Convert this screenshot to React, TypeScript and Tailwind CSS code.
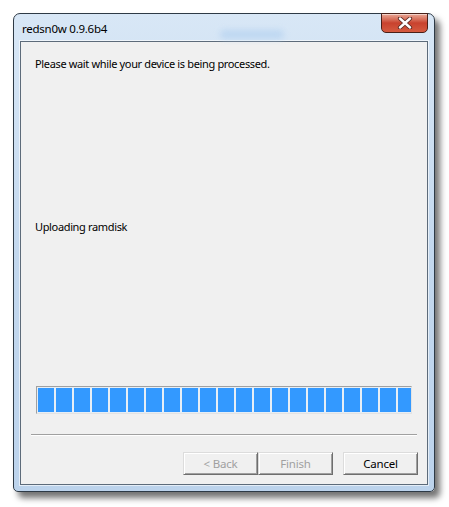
import React from 'react'

const font = { fontFamily: '"Noto Sans", "Open Sans", sans-serif' }

function CloseButton() {
  return (
    <div className="w-[47px] h-[20px] -mt-px rounded-b-[5px] border border-[#4a2018] bg-gradient-to-b from-[#e9a897] via-[#c8422e] to-[#d55a40] flex items-center justify-center shadow-[inset_0_1px_0_rgba(255,255,255,0.5)]">
      <svg width="16" height="12" viewBox="0 0 16 12">
        <path
          d="M3 1.5 L13 10.5 M13 1.5 L3 10.5"
          stroke="#5a2a24"
          strokeWidth="4.2"
          strokeLinecap="round"
        />
        <path
          d="M3 1.5 L13 10.5 M13 1.5 L3 10.5"
          stroke="#ffffff"
          strokeWidth="2.4"
          strokeLinecap="round"
        />
      </svg>
    </div>
  )
}

function WinButton({ label, disabled }: { label: string; disabled?: boolean }) {
  return (
    <div
      className={
        'w-[75px] h-[23px] flex items-center justify-center text-[11.5px] tracking-[-0.2px] bg-[#f0f0f0] border border-t-[#dcdcdc] border-l-[#dcdcdc] border-b-[#6e6e6e] border-r-[#6e6e6e] shadow-[inset_1px_1px_0_#ffffff,inset_-1px_-1px_0_#a0a0a0] ' +
        (disabled ? 'text-[#a0a0a0]' : 'text-black')
      }
    >
      {label}
    </div>
  )
}

export default function App() {
  const blocks = Array.from({ length: 21 })

  return (
    <div className="w-[449px] h-[507px] bg-white pt-[13px] pl-[13px]" style={font}>
      <div className="w-[422px] h-[479px] rounded-t-[7px] rounded-b-[5px] border border-[#2e3a46] bg-gradient-to-b from-[#d8e7f6] via-[#c3d8ee] to-[#bcd3ec] shadow-[5px_6px_6px_rgba(0,0,0,0.55)] flex flex-col px-[6px] pb-[6px]">
        {/* Title bar */}
        <div className="relative h-[27px] flex items-start justify-between">
          <span className="mt-[6px] pl-[2px] text-[11.5px] tracking-[-0.25px] text-black">redsn0w 0.9.6b4</span>
          <div className="absolute left-[200px] top-[16px] w-[64px] h-[9px] rounded-full bg-[#b3d1f0] blur-[3px] opacity-70" />
          <CloseButton />
        </div>

        {/* Client area */}
        <div className="flex-1 border border-[#5d6b7a] bg-[#f0f0f0] shadow-[0_0_0_1px_rgba(255,255,255,0.6)] flex flex-col">
          <p className="mt-[14px] ml-[14px] text-[11px] tracking-[-0.35px] leading-[16px] text-black">
            Please wait while your device is being processed.
          </p>
          <p className="mt-[147px] ml-[14px] text-[11px] tracking-[-0.35px] leading-[16px] text-black">
            Uploading ramdisk
          </p>

          {/* Progress bar */}
          <div className="mt-[151px] ml-[15px] w-[376px] h-[28px] border border-t-[#a0a0a0] border-l-[#a0a0a0] border-b-[#e3e3e3] border-r-[#e3e3e3] bg-[#e6eef6] p-px overflow-hidden">
            <div className="flex gap-[2px] h-full">
              {blocks.map((_, i) => (
                <div key={i} className="w-[16px] h-full shrink-0 bg-[#3399ff]" />
              ))}
            </div>
          </div>

          {/* Separator */}
          <div className="mt-[20px] ml-[10px] w-[386px] border-t border-t-[#a0a0a0] border-b border-b-white" />

          {/* Buttons */}
          <div className="mt-[16px] flex justify-end pr-[9px]">
            <WinButton label="< Back" disabled />
            <WinButton label="Finish" disabled />
            <div className="w-[10px]" />
            <WinButton label="Cancel" />
          </div>
        </div>
      </div>
    </div>
  )
}
